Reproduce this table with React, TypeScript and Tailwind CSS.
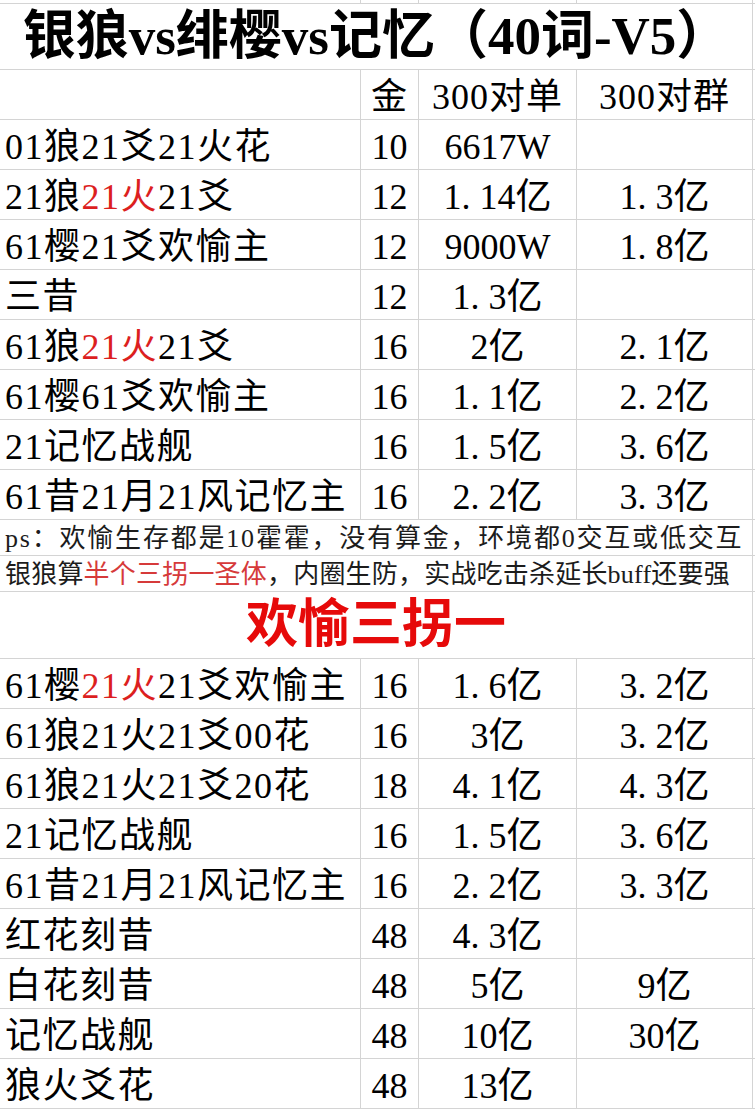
import React from 'react';

type Cell = { text: string; red?: string };

const line = 'border-[#d4d4d4]';
const font = { fontFamily: '"Liberation Serif", "Noto Sans CJK SC", serif' };

const top: [Cell, string, string, string][] = [
  [{ text: '01狼21爻21火花' }, '10', '6617W', ''],
  [{ text: '21狼|21火|21爻', red: '21火' }, '12', '1.14亿', '1.3亿'],
  [{ text: '61樱21爻欢愉主' }, '12', '9000W', '1.8亿'],
  [{ text: '三昔' }, '12', '1.3亿', ''],
  [{ text: '61狼|21火|21爻', red: '21火' }, '16', '2亿', '2.1亿'],
  [{ text: '61樱61爻欢愉主' }, '16', '1.1亿', '2.2亿'],
  [{ text: '21记忆战舰' }, '16', '1.5亿', '3.6亿'],
  [{ text: '61昔21月21风记忆主' }, '16', '2.2亿', '3.3亿'],
];

const bottom: [Cell, string, string, string][] = [
  [{ text: '61樱|21火|21爻欢愉主', red: '21火' }, '16', '1.6亿', '3.2亿'],
  [{ text: '61狼21火21爻00花' }, '16', '3亿', '3.2亿'],
  [{ text: '61狼21火21爻20花' }, '18', '4.1亿', '4.3亿'],
  [{ text: '21记忆战舰' }, '16', '1.5亿', '3.6亿'],
  [{ text: '61昔21月21风记忆主' }, '16', '2.2亿', '3.3亿'],
  [{ text: '红花刻昔' }, '48', '4.3亿', ''],
  [{ text: '白花刻昔' }, '48', '5亿', '9亿'],
  [{ text: '记忆战舰' }, '48', '10亿', '30亿'],
  [{ text: '狼火爻花' }, '48', '13亿', ''],
];

const widths = ['w-[361px]', 'w-[58px]', 'w-[158px]', 'w-[176px]'];

// Excel 宋体 draws the half-width dot in a wide box
function Num({ v }: { v: string }) {
  const parts = v.split('.');
  if (parts.length === 1) return <>{v}</>;
  return (
    <>
      {parts[0]}
      <span className="inline-block w-[18px]">.</span>
      {parts[1]}
    </>
  );
}

function Label({ cell }: { cell: Cell }) {
  return (
    <>
      {cell.text.split('|').map((p, i) => (
        <span key={i} className={p === cell.red ? 'text-[#dc1f1f]' : ''}>
          {p}
        </span>
      ))}
    </>
  );
}

function Row({ row }: { row: [Cell, string, string, string] }) {
  const base = `h-[50px] border-b border-r ${line} flex items-center pt-[5px] leading-none whitespace-nowrap`;
  return (
    <div className="flex text-[36px] text-black">
      <div className={`${base} w-[361px] pl-[5px] tracking-[1.5px]`}>
        <Label cell={row[0]} />
      </div>
      <div className={`${base} w-[58px] justify-center`}>{row[1]}</div>
      <div className={`${base} w-[158px] justify-center`}>
        <Num v={row[2]} />
      </div>
      <div className={`${base} w-[176px] justify-center`}>
        <Num v={row[3]} />
      </div>
      <div className={`h-[50px] border-b ${line} flex-1`} />
    </div>
  );
}

function Strip() {
  return (
    <div className="flex h-[4px]">
      {widths.map((w) => (
        <div key={w} className={`${w} border-b border-r ${line}`} />
      ))}
      <div className={`flex-1 border-b ${line}`} />
    </div>
  );
}

function Merged({ h, className, children }: { h: string; className: string; children: React.ReactNode }) {
  return (
    <div className="flex">
      <div className={`w-[753px] ${h} border-b border-r ${line} flex items-center leading-none whitespace-nowrap ${className}`}>
        {children}
      </div>
      <div className={`flex-1 ${h} border-b ${line}`} />
    </div>
  );
}

export default function App() {
  return (
    <div className="w-[755px] h-[1110px] bg-white overflow-hidden" style={font}>
      <Strip />
      <Merged h="h-[66px]" className="justify-center text-[53px] font-bold text-black">
        银狼vs绯樱vs记忆（40词-V5）
      </Merged>

      <div className="flex text-[36px] text-black">
        {['', '金', '300对单', '300对群'].map((h, i) => (
          <div
            key={i}
            className={`h-[50px] border-b border-r ${line} flex items-center justify-center pt-[5px] leading-none whitespace-nowrap tracking-[1px] ${widths[i]}`}
          >
            {h}
          </div>
        ))}
        <div className={`h-[50px] border-b ${line} flex-1`} />
      </div>

      {top.map((r, i) => (
        <Row key={i} row={r} />
      ))}

      <Merged h="h-[36px]" className="pl-[5px] pt-[3px] text-[26px] tracking-[1.8px] text-[#1c1c1c]">
        ps：欢愉生存都是10霍霍，没有算金，环境都0交互或低交互
      </Merged>
      <Merged h="h-[36px]" className="pl-[5px] pt-[3px] text-[26px] tracking-[0.2px] text-[#1c1c1c]">
        银狼算<span className="text-[#d63a3a]">半个三拐一圣体</span>，内圈生防，实战吃击杀延长buff还要强
      </Merged>

      <Merged h="h-[67px]" className="justify-center text-[52px] font-bold text-[#e60a0a]">
        欢愉三拐一
      </Merged>

      {bottom.map((r, i) => (
        <Row key={i} row={r} />
      ))}
    </div>
  );
}
